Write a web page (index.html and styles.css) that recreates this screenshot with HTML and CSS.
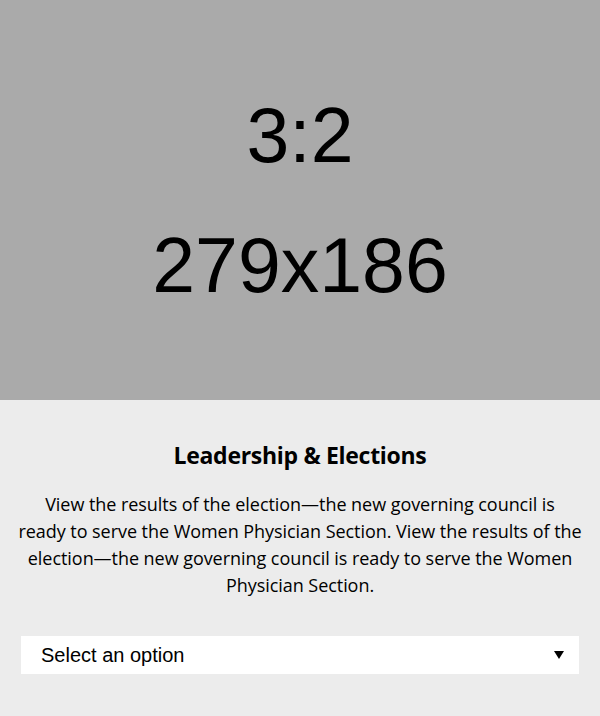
FILE: index.html
```html
<!DOCTYPE html>
<html lang="en">
<head>
<meta charset="utf-8">
<title>Leadership &amp; Elections</title>
<link rel="stylesheet" href="styles.css">
</head>
<body>
<article class="card">
  <div class="placeholder">
    <span class="ph-line">3:2</span>
    <span class="ph-line">279x186</span>
  </div>
  <div class="card-body">
    <h2 class="title">Leadership &amp; Elections</h2>
    <p class="desc">View the results of the election—the new governing council is<br> ready to serve the Women Physician Section. View the results of the<br> election—the new governing council is ready to serve the Women<br> Physician Section.</p>
    <div class="select" role="combobox" aria-expanded="false">
      <span class="select-label">Select an option</span>
      <span class="select-arrow"></span>
    </div>
  </div>
</article>
</body>
</html>
```

FILE: styles.css
```css
html, body {
  margin: 0;
  padding: 0;
  background: #ececec;
}

.card {
  width: 600px;
  height: 716px;
  background: #ececec;
  display: flex;
  flex-direction: column;
}

.placeholder {
  height: 400px;
  background: #aaaaaa;
  display: flex;
  flex-direction: column;
  align-items: center;
  justify-content: center;
  gap: 53px;
  font-family: "Liberation Sans", Arial, sans-serif;
  font-size: 77px;
  line-height: 1;
  color: #000;
}

.card-body {
  padding: 40px 21px 42px;
  display: flex;
  flex-direction: column;
  align-items: stretch;
  text-align: center;
  color: #000;
}

.title {
  margin: 0;
  font-family: "Open Sans", "Noto Sans", sans-serif;
  font-weight: 700;
  font-size: 23px;
  line-height: 30px;
  letter-spacing: -0.3px;
}

.desc {
  margin: 21px -14px 0;
  font-family: "Open Sans", "Noto Sans", sans-serif;
  font-size: 18px;
  line-height: 27px;
  letter-spacing: -0.05px;
  white-space: nowrap;
}

.select {
  margin-top: 37px;
  height: 38px;
  background: #fff;
  display: flex;
  align-items: center;
  justify-content: space-between;
  padding: 0 15px 0 20px;
  text-align: left;
}

.select-label {
  font-family: "Liberation Sans", Arial, sans-serif;
  font-size: 20px;
  color: #000;
}

.select-arrow {
  width: 0;
  height: 0;
  border-left: 5px solid transparent;
  border-right: 5px solid transparent;
  border-top: 8px solid #000;
}
```
